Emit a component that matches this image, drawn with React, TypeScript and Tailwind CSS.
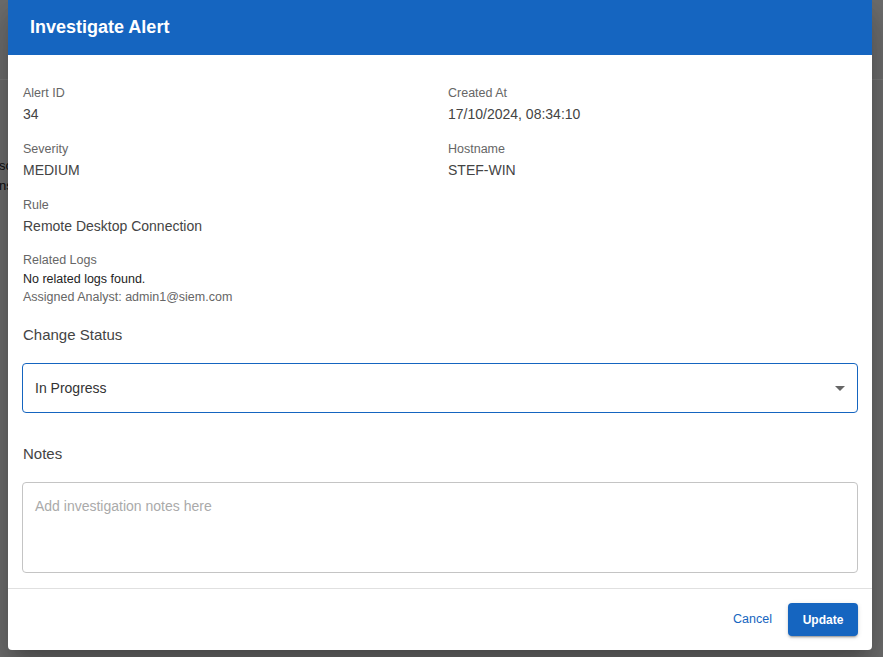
const fields = [
  { label: 'Alert ID', value: '34' },
  { label: 'Created At', value: '17/10/2024, 08:34:10' },
  { label: 'Severity', value: 'MEDIUM' },
  { label: 'Hostname', value: 'STEF-WIN' },
  { label: 'Rule', value: 'Remote Desktop Connection' },
]

function Field({ label, value }: { label: string; value: string }) {
  return <div className="pb-[14px]">
    <div className="text-[12.5px] leading-[20px] text-[#666]">{label}</div>
    <div className="text-[14px] leading-[22px] text-[#444]">{value}</div>
  </div>
}

export default function App() {
  return <div className="relative h-[657px] w-[883px] overflow-hidden bg-[#dcdcdc] font-['Liberation_Sans',Arial,sans-serif]">
    {/* page behind the dialog */}
    <div className="h-[80px] border-b border-[#f2f2f2] bg-[#dcdcdc]" />
    <div className="-ml-[1px] pt-[76px] text-[13px] leading-[20px] text-[#222]">
      <div>sc</div>
      <div>ns</div>
    </div>

    {/* backdrop */}
    <div className="absolute inset-0 bg-black/50" />

    {/* dialog */}
    <div className="absolute left-[8px] top-0 flex h-[650px] w-[864px] flex-col overflow-hidden rounded-b-[4px] bg-white shadow-[0_11px_15px_-7px_rgba(0,0,0,0.2),0_24px_38px_3px_rgba(0,0,0,0.14),0_9px_46px_8px_rgba(0,0,0,0.12)]">
      <div className="flex h-[55px] items-center bg-[#1565c0] px-[22px]">
        <h2 className="text-[18px] font-bold text-white">Investigate Alert</h2>
      </div>

      <div className="px-[15px] pb-[15px] pt-[28px]">
        <div className="grid grid-cols-2 gap-x-4">
          {fields.map(f => <Field key={f.label} label={f.label} value={f.value} />)}
        </div>

        <div className="-mt-[1px] text-[12.5px] leading-[20px] text-[#666]">Related Logs</div>
        <div className="text-[12.5px] leading-[18px] text-[#222]">No related logs found.</div>
        <div className="text-[12.5px] leading-[18px] text-[#666]">Assigned Analyst: admin1@siem.com</div>

        <div className="mt-[18px] text-[15px] leading-[22px] text-[#444]">Change Status</div>
        <div className="-mx-px mt-[17px] flex h-[50px] items-center justify-between rounded-[4px] border border-[#1565c0] pl-[12px] pr-[5px]">
          <span className="text-[14px] text-[#333]">In Progress</span>
          <svg width="24" height="24" viewBox="0 0 24 24" className="fill-[#666]">
            <path d="M7 10l5 5 5-5z" />
          </svg>
        </div>

        <div className="mt-[30px] text-[15px] leading-[22px] text-[#444]">Notes</div>
        <div className="-mx-px mt-[17px]">
          <textarea
            placeholder="Add investigation notes here"
            className="block h-[91px] w-full resize-none rounded-[4px] border border-[#c4c4c4] px-[12px] py-[13px] text-[14px] leading-[20px] text-[#333] outline-none placeholder:text-[#aaa]"
          />
        </div>
      </div>

      <div className="flex flex-1 items-center justify-end gap-[8px] border-t border-[#e0e0e0] pr-[14px]">
        <button className="rounded-[4px] px-[8px] py-[6px] text-[12.5px] text-[#1565c0]">Cancel</button>
        <button className="h-[33px] w-[70px] rounded-[4px] bg-[#1565c0] text-[12px] font-bold text-white shadow-[0_3px_1px_-2px_rgba(0,0,0,0.2),0_2px_2px_0_rgba(0,0,0,0.14),0_1px_5px_0_rgba(0,0,0,0.12)]">Update</button>
      </div>
    </div>
  </div>
}
